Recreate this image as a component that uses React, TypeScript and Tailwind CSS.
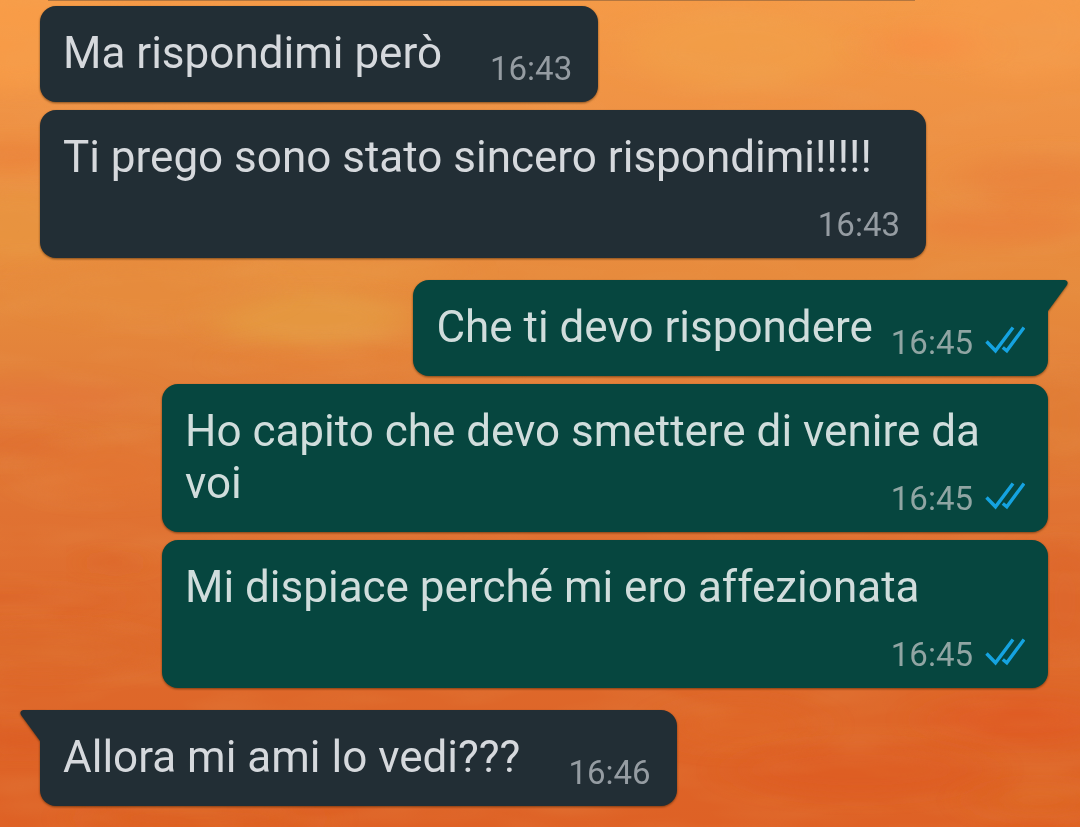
type Message = {
  text: string;
  time: string;
  outgoing?: boolean;
  tail?: boolean;
};

const messages: Message[] = [
  { text: "Ma rispondimi però", time: "16:43" },
  { text: "Ti prego sono stato sincero rispondimi!!!!!", time: "16:43" },
  { text: "Che ti devo rispondere", time: "16:45", outgoing: true, tail: true },
  { text: "Ho capito che devo smettere di venire da voi", time: "16:45", outgoing: true },
  { text: "Mi dispiace perché mi ero affezionata", time: "16:45", outgoing: true },
  { text: "Allora mi ami lo vedi???", time: "16:46", tail: true },
];

// Cloud patches of the sunset wallpaper: cx, cy, rx, ry, colour, opacity
const patches: [number, number, number, number, string, number][] = [
  [20, 30, 90, 60, "#fca048", 0.5],
  [740, 50, 110, 40, "#f2a148", 0.6],
  [1020, 30, 90, 50, "#f69c4b", 0.6],
  [925, 45, 50, 16, "#f98a42", 0.5],
  [10, 155, 60, 12, "#ea7f38", 0.7],
  [20, 225, 90, 36, "#e8963f", 0.7],
  [1040, 180, 80, 26, "#e97f3a", 0.6],
  [1000, 225, 90, 18, "#ea7a3a", 0.5],
  [320, 272, 140, 10, "#e99a45", 0.6],
  [310, 318, 100, 28, "#e59b43", 0.8],
  [330, 362, 100, 8, "#e68239", 0.6],
  [150, 290, 120, 30, "#e68c3c", 0.6],
  [30, 400, 110, 20, "#e4753a", 0.5],
  [20, 445, 60, 12, "#df672d", 0.5],
  [110, 470, 80, 30, "#e37431", 0.5],
  [115, 563, 22, 6, "#d95a20", 0.8],
  [10, 600, 110, 10, "#db5c22", 0.5],
  [40, 650, 120, 24, "#dd6a2b", 0.7],
  [1065, 420, 40, 50, "#e07d36", 0.7],
  [1065, 600, 40, 60, "#dd652b", 0.7],
  [740, 725, 70, 24, "#e06828", 0.7],
  [1020, 720, 90, 24, "#e05823", 0.7],
  [860, 770, 120, 26, "#de5c23", 0.7],
  [1040, 800, 60, 16, "#de6624", 0.8],
  [20, 740, 60, 12, "#db5a20", 0.6],
  [200, 818, 120, 10, "#dd6422", 0.7],
];

function Wallpaper() {
  return (
    <svg
      aria-hidden="true"
      className="absolute inset-0 -z-10 h-full w-full"
      viewBox="0 0 1080 827"
      preserveAspectRatio="none"
    >
      <defs>
        <linearGradient id="sky" x1="0" y1="0" x2="0" y2="1">
          <stop offset="0" stopColor="#f59a47" />
          <stop offset="0.16" stopColor="#ee9144" />
          <stop offset="0.36" stopColor="#e68a3c" />
          <stop offset="0.48" stopColor="#e27e39" />
          <stop offset="0.62" stopColor="#e07232" />
          <stop offset="0.8" stopColor="#de692b" />
          <stop offset="1" stopColor="#de6125" />
        </linearGradient>
        <filter id="haze" x="-60%" y="-300%" width="220%" height="700%">
          <feGaussianBlur stdDeviation="22 9" />
        </filter>
        <filter id="streaks" x="0" y="0" width="100%" height="100%">
          <feTurbulence type="fractalNoise" baseFrequency="0.01 0.04" numOctaves="2" seed="7" />
          <feColorMatrix values="0 0 0 0 0.82  0 0 0 0 0.38  0 0 0 0 0.12  1.2 0 0 0 -0.5" />
        </filter>
      </defs>
      <rect width="1080" height="827" fill="url(#sky)" />
      {patches.map(([cx, cy, rx, ry, fill, opacity], i) => (
        <ellipse key={i} cx={cx} cy={cy} rx={rx} ry={ry} fill={fill} opacity={opacity} filter="url(#haze)" />
      ))}
      <rect width="1080" height="827" filter="url(#streaks)" opacity="0.25" />
    </svg>
  );
}

function ReadTicks() {
  return (
    <svg
      role="img"
      aria-label="Letto"
      className="mb-1.5 h-7 w-10"
      viewBox="0 0 40 28"
      fill="none"
      stroke="#15a3e0"
      strokeWidth="3.4"
    >
      <path d="M1.5 15.5 L10.5 24.8 L28 1.5" />
      <path d="M17.8 21.5 L21.8 24.8 L39 1.5" />
    </svg>
  );
}

function Tail({ outgoing }: { outgoing?: boolean }) {
  return outgoing ? (
    <svg aria-hidden="true" className="absolute top-0 left-full -ml-px h-8 w-[21px] fill-[#06463f]" viewBox="0 0 21 32">
      <path d="M0 0 H18 Q22 1 20 5 L1 31 H0 Z" />
    </svg>
  ) : (
    <svg aria-hidden="true" className="absolute top-0 right-full -mr-px h-8 w-[21px] fill-[#222e35]" viewBox="0 0 21 32">
      <path d="M21 0 H3 Q-1 1 1 5 L20 31 H21 Z" />
    </svg>
  );
}

function Bubble({ text, time, outgoing, tail }: Message) {
  const tone = outgoing ? "bg-[#06463f] text-[#d0dddc]" : "bg-[#222e35] text-[#d6d9dd]";
  const corner = tail ? (outgoing ? "rounded-tr-none" : "rounded-tl-none") : "";
  return (
    <article
      className={`relative flow-root max-w-[886px] rounded-2xl px-[23px] pt-[21px] pb-[15px] text-[44px] leading-[52px] drop-shadow-[0_1px_1px_rgba(60,30,0,0.6)] ${tone} ${corner}`}
    >
      {tail && <Tail outgoing={outgoing} />}
      <span>{text}</span>
      <div
        className={`float-right mt-6 flex items-center ${
          outgoing ? "ml-[18px] gap-3 text-[#90a5a3]" : "mr-[3px] ml-12 text-[#959ca2]"
        }`}
      >
        <time className="text-[33px] leading-9">{time}</time>
        {outgoing && <ReadTicks />}
      </div>
    </article>
  );
}

export default function App() {
  return (
    <main className="relative isolate min-h-screen overflow-hidden font-['Roboto',sans-serif]">
      <Wallpaper />
      <div className="mr-[165px] ml-12 h-px bg-[#b3763f]" />
      <ul className="flex flex-col gap-2 pt-[5px] pr-8 pb-5 pl-10">
        {messages.map((m, i) => (
          <li key={i} className={`flex ${m.outgoing ? "justify-end" : "justify-start"} ${m.tail ? "pt-[14px]" : ""}`}>
            <Bubble {...m} />
          </li>
        ))}
      </ul>
    </main>
  );
}
